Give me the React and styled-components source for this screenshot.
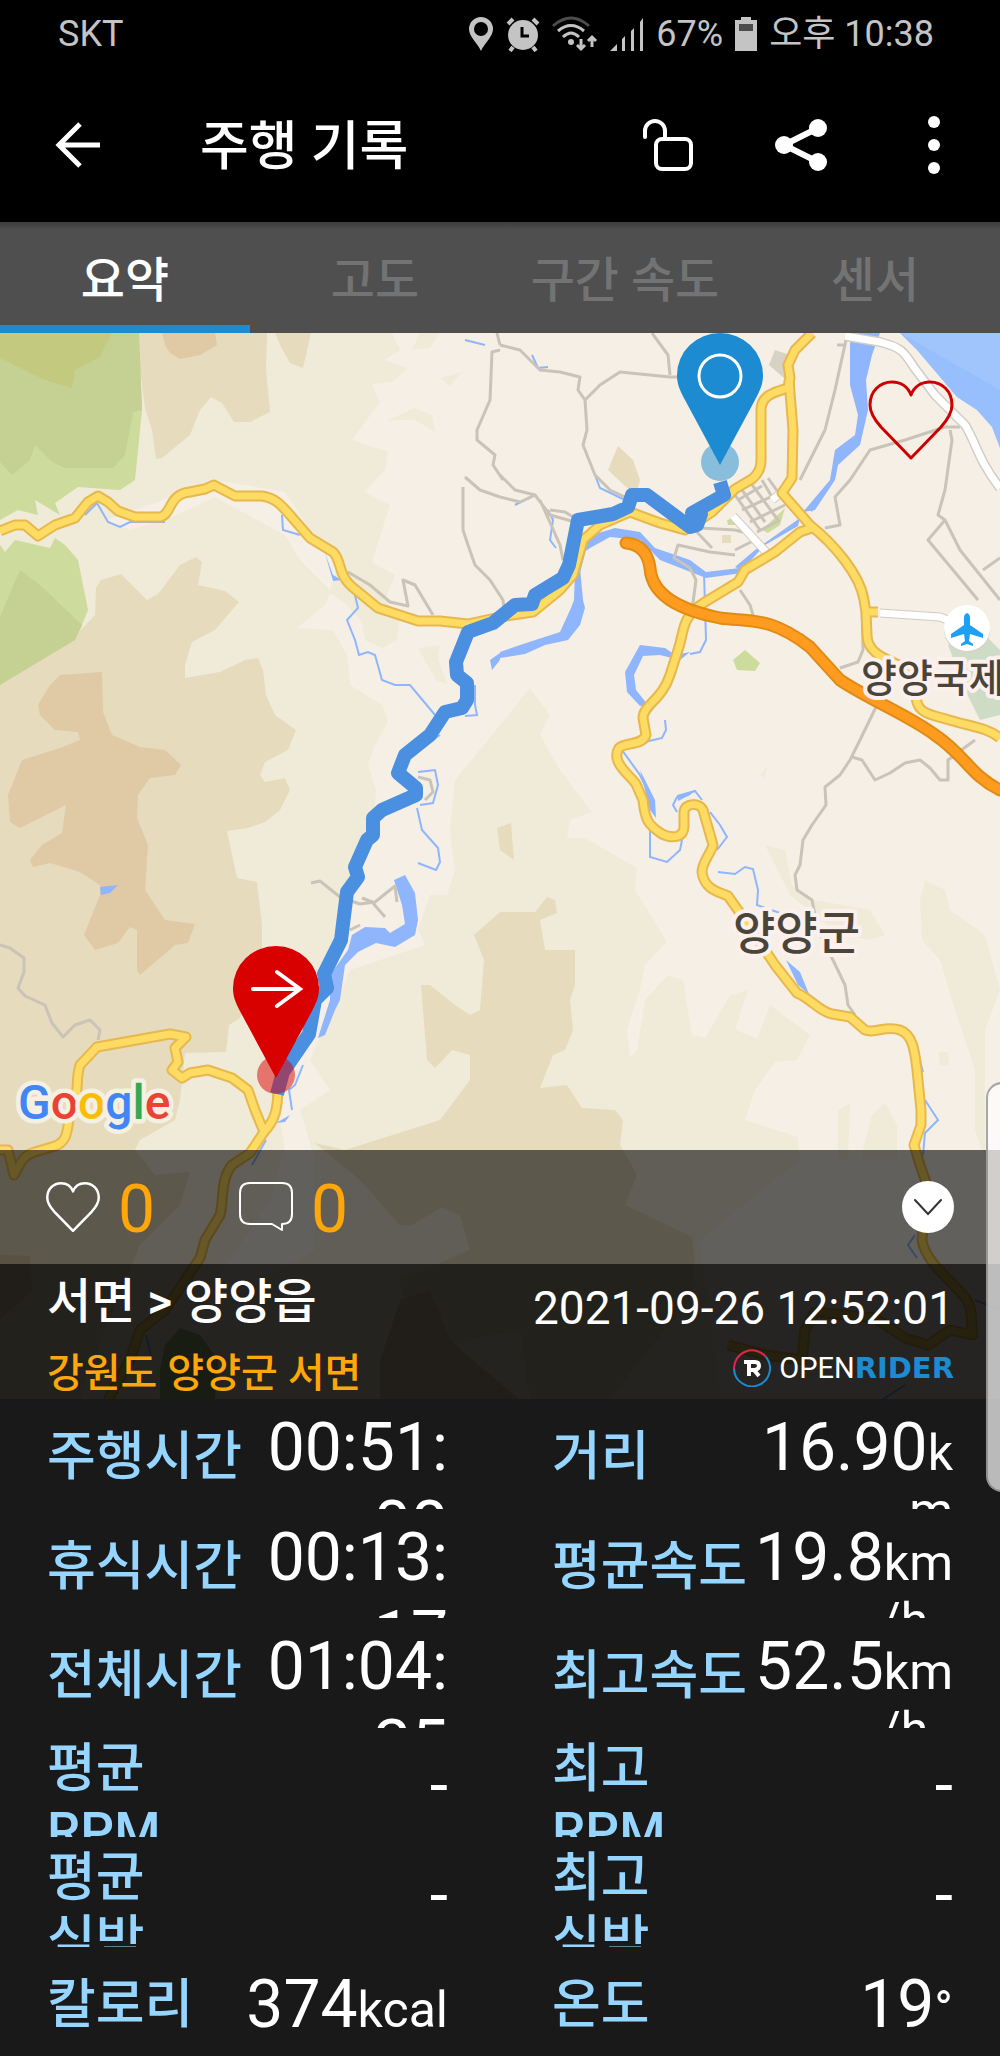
import { useState } from 'react'
import styled, { createGlobalStyle } from 'styled-components'

const tabs = ['요약', '고도', '구간 속도', '센서']

const stats = [
  { label: '주행시간', value: '00:51:08' },
  { label: '거리', value: '16.90', unit: 'km' },
  { label: '휴식시간', value: '00:13:17' },
  { label: '평균속도', value: '19.8', unit: 'km/h\u00a0\u00a0' },
  { label: '전체시간', value: '01:04:25' },
  { label: '최고속도', value: '52.5', unit: 'km/h\u00a0\u00a0' },
  { label: '평균 RPM', value: '-' },
  { label: '최고 RPM', value: '-' },
  { label: '평균 심박', value: '-' },
  { label: '최고 심박', value: '-' },
  { label: '칼로리', value: '374', unit: 'kcal' },
  { label: '온도', value: '19', unit: '°' },
]

const lowland = [
  'M0 333H392L400 350 385 360 408 368 392 382 372 384 380 402 352 440 388 452 385 470 364 492 390 505 372 562 395 575 385 600 400 618 397 640 382 648 365 640 362 622 345 603 330 593 325 605 297 628 333 630 347 655 350 685 382 705 388 722 375 745 368 765 376 790 372 840 355 870 342 930 330 960 310 990 300 1025 275 1090 285 1150 270 1200 230 1260 150 1400H0Z',
  'M500 725L530 688 550 715 540 735 560 770 592 812 570 820 567 838 585 838 637 868 635 890 660 930 667 942 645 965 640 990 627 1030 630 1057 637 1050 645 1000 668 975 683 980 692 1035 705 1038 730 995 748 990 735 1030 757 1038 770 1005 810 1035 797 1060 775 1062 755 1090 745 1120 798 1137 800 1160 700 1240 720 1400H160L230 1300 315 1250 315 1160 300 1110 330 1090 310 1060 350 970 425 945 418 930 430 895 447 895 455 870 450 830 455 780Z',
  'M925 880L945 890 950 910 985 935 1000 990 985 1030 985 1160 975 1130 975 1070 955 1010 940 960 922 940 920 900Z',
  'M765 845L785 850 792 885 815 900 870 910 885 935 870 940 840 935 790 895Z',
  'M838 1110L850 1103 848 1160H838ZM872 1115L885 1103 897 1125V1160H860Z',
  'M760 775L767 766 765 778ZM938 1052H948L949 1065 940 1066Z',
  'M412 350L420 333H440L430 348ZM440 378L462 372 450 386ZM388 420L415 408 432 415 435 432 415 420ZM418 648L440 645 438 660 448 685 436 680Z',
]

const hills = [
  'M139 333H267L266 370 270 412 250 422H234L222 403 211 397 200 410 190 435 162 458 156 459 152 430 145 408 140 370Z',
  'M275 333H311L303 368 290 363 280 345Z',
  'M0 685L30 665 78 633 95 615 96 588 101 580 121 574 147 600 158 594 180 565 196 557 202 562 198 585 225 591 239 602 215 630 192 642 185 665 185 678 220 672 245 660 258 658 263 670 266 695 275 715 296 730 288 750 265 762 260 775 265 782 285 778 290 790 280 810 265 822 248 828 227 831 237 878 257 882 262 925 262 960 240 1018 229 1025 226 1052 185 1053 180 1100 175 1120 140 1140 135 1150 155 1175 190 1172 180 1205 140 1245 130 1270 100 1340 80 1400H0Z',
  'M500 912H535L547 897 555 900 557 913 540 920 545 950H575V985L570 1000 573 1030 565 1050 553 1055 540 1088 567 1085 582 1108 615 1110 623 1120 620 1145 637 1175 625 1205 692 1237 695 1265 690 1300 640 1360 610 1400H530L520 1330 410 1350 400 1280 470 1250 460 1215 442 1207 412 1225 400 1225 360 1180 315 1143 345 1150 440 1120 470 1080 470 1055 452 1050 435 1068 427 1060 421 985 430 985 455 1005 470 1015 480 1010 484 960 474 935Z',
  'M497 828L511 823 514 860 500 850Z',
  'M608 470L618 446 633 460 640 480 636 495 624 485Z',
  'M722 535H731V543H722Z',
]

const peaks = [
  'M162 333H215L217 345 200 355 180 359 170 353 165 345Z',
  'M60 675L102 672 103 712 112 735 140 747 165 750 181 765 175 775 150 778 138 795 137 818 148 845 145 890 165 920 195 924 188 943 175 945 140 975 137 970V930L130 927 118 943 95 950 84 935 100 895V885L80 872 50 863 33 867 30 860 42 845 62 833 66 805 20 828 10 822 8 795 22 760 60 748 80 740 78 732 55 730 40 715 38 705 50 685Z',
  'M0 1255L30 1256 32 1290 0 1320ZM380 1360L400 1300 430 1290 450 1340 520 1400H380Z',
]

const minorRoads = [
  'M500 345L520 350 540 370 560 372 580 377 578 390 585 400 587 430 583 445 595 475 610 490 625 497',
  'M585 400L600 385 620 372 670 377 690 377M652 333L668 355 670 375',
  'M846 340L835 390 825 430 800 480M837 345H845',
  'M960 427H945L905 440 870 450 850 480 835 497 840 525 825 528',
  'M950 430L952 440 945 490 938 515 945 520 928 540 978 600M945 520L960 550 1000 600M983 570L1000 558',
  'M500 475L515 490 535 495 550 515 575 522M540 500L560 545 563 560M500 497L520 502 535 495M550 510L565 512 578 520',
  'M735 555L710 552 678 545 674 558 690 568 696 580 692 610M695 530L712 548M700 528L735 530 755 535M735 550L755 540',
  'M740 590L750 605 753 615M862 605L863 650 858 662 840 668',
  'M876 707L860 740 850 760 840 775 825 787 826 805 812 825 803 840 800 865 795 875 797 890 812 900 818 930 833 960 845 985 848 1005 855 1015',
  'M852 757L862 760 875 780 890 773 905 763 920 760 930 768 940 780 948 780 948 760 975 740',
  'M497 333L500 345M500 350L492 352 490 400 477 430V440L495 455 493 465 503 480M465 477L480 490 500 497M463 487V530L468 545 475 565 490 580 503 600 504 608',
  'M348 572L370 585 390 602 408 606 403 580 415 585 433 615',
  'M0 945L10 948 24 958V972L18 988 25 996 45 1005 52 1023 63 1037 75 1025 90 1020 100 1030 98 1040',
  'M311 883L320 881 340 897 360 904 375 902 395 886 397 902M362 898L372 902 385 917M350 930L360 925',
  'M418 777L430 780 433 792 425 800',
]

const townStreets = [
  'M735 495L760 530M742 490L765 522M750 482L778 520M762 480L772 497M768 478L778 492',
  'M738 500L762 486M742 510L775 495M750 522L785 505M757 532L780 520',
]

const rivers = [
  'M500 655L522 648',
  'M577 580L585 550M704 573L706 640 700 652 690 654',
  'M622 750L640 775 652 800M650 830V857L667 862 680 850 682 840M677 812L673 805 677 797 695 791 702 800',
  'M710 812L720 825 727 837 717 850M718 872L735 874 745 867 753 869 758 890 757 905 800 920 795 945M665 720L666 730 662 738 645 742',
  'M925 1100L938 1120 925 1133 923 1155M906 1030L915 1042 923 1072M915 1235L908 1245 917 1258',
  'M85 515L97 503 108 522 120 527 130 522H165M282 515L283 530 300 535M355 595L358 608 347 620 355 640 359 655 368 652 375 655 382 680 395 685H410L435 715',
  'M418 772L435 770 438 785 433 803 420 805M417 808L422 830 438 848 440 862 436 870 418 863M405 758L440 735',
  'M303 1065L295 1085 289 1090 292 1110M266 1140L252 1165M475 685V705L477 715 465 716',
  'M465 340L485 345M532 355L538 368 548 367M595 475L600 488 625 500M548 510L553 520 550 540 556 548M515 505L535 495',
  'M1000 1310L975 1300M882 1400L905 1385M146 1335L152 1360',
]

const wideRivers = [
  'M851 333H880L872 355 866 380 868 410 860 445 838 465 835 480 815 510 803 512 830 480 835 450 855 435 858 415 850 385V345Z',
  'M580 555L592 535 615 528 640 532 655 548 690 560 706 572 740 568 742 573 706 578 660 560 640 540 610 537 590 548Z',
  'M575 570L580 568 583 600 585 608 580 625 568 640 545 645 525 654 500 658 500 652 520 645 560 632 571 608 574 600Z',
  'M640 645L665 648 675 655 690 652 680 660 660 655 643 656 634 675 636 690 648 705 640 706 627 692 625 672Z',
  'M735 567L755 550 800 518 798 526 765 545 742 570ZM810 510L830 482 812 512ZM765 553L795 532 790 540Z',
  'M394 880L405 875 415 893 418 920 415 935 395 947 376 943 358 952 345 965 340 1000 335 1010 325 1035 318 1038 330 1000 330 975 348 950 352 935 365 927 385 928 390 933 405 924 402 905Z',
  'M100 887L118 885 110 893 101 895ZM490 660L500 653V660L492 670ZM325 553L333 575 342 580 333 581ZM786 960L800 972 809 994 798 985Z',
  'M640 770L655 800 656 818 650 810ZM677 795L695 790 690 795 678 801ZM710 810L728 837 718 822ZM276 1123L290 1115 285 1122Z',
]

const mainRoads = [
  'M0 531L15 525 25 525 38 536 55 525 75 518 88 502 98 496 108 502 118 511 135 517H160C172 515 168 494 190 492L205 489 214 485 235 496 262 496C276 498 282 506 290 515L310 538 333 552C343 562 336 575 356 590L378 608 418 621 440 621 468 624 500 617 533 612 560 590 573 575 583 540 600 525 630 512 660 523 685 530 712 512 735 489 752 479C763 470 761 460 761 450V410C761 395 775 392 788 388L790 378 788 365 795 350 812 333',
  'M789 380L793 430 792 478 782 493 810 525C835 545 860 575 864 600L866 612 867 635C867 655 890 660 905 668L916 690C915 706 920 712 935 716L960 723C980 728 990 730 1000 738',
  'M866 612H878',
  'M815 527L800 532 775 552 745 570 738 582 705 602C680 618 685 630 678 650L670 675C662 700 643 705 643 718L646 735C642 746 625 742 619 748 610 762 630 775 636 784L643 800C645 820 648 825 662 834 672 839 685 838 684 825V812C685 802 700 803 703 810L713 845C710 855 702 862 702 872 704 890 720 892 728 896L745 920 775 965 797 993C810 998 820 1012 832 1014L850 1017 865 1030C875 1034 885 1025 900 1030 914 1035 915 1055 917 1070L921 1110 921 1125 914 1145 920 1165 927 1185 925 1205 922 1240C925 1260 945 1275 960 1292 975 1305 970 1320 973 1335L950 1330 928 1345 905 1338 875 1318 815 1312 805 1330 802 1360 765 1355 728 1345',
  'M0 1150L8 1150 14 1175C22 1160 24 1155 35 1152L55 1146C72 1140 65 1122 73 1105 80 1090 75 1080 80 1065L97 1047 170 1034 186 1037 175 1048 178 1062 172 1070 182 1078 190 1073 208 1070 232 1078 248 1090 255 1110 264 1132C275 1120 278 1110 278 1085',
  'M264 1132L250 1153 232 1165C220 1180 224 1200 220 1215L205 1240 200 1258 165 1310 140 1330 130 1360 108 1400',
]

const highway = 'M626 543C640 544 648 553 650 568 652 600 690 612 720 618 750 622 770 616 810 647L840 680C870 700 910 716 935 735 965 755 970 775 1000 790'

const coastRoad = 'M845 336L880 342C905 348 905 355 916 370L935 395 965 425C975 440 978 460 1000 488'

const track = 'M277 1094L283 1072 309 1034 315 1000 327 988 324 974 341 940 347 892 358 877 355 867 367 840 373 835 373 818 382 810 416 795 416 788 398 773 405 755 430 735 445 712 462 708 467 700 467 683 457 675 456 662 468 632 493 623 515 605 532 604 535 595 563 578 569 565 578 520 613 514 628 507 632 495 647 495 690 527 697 525 701 514 692 513 724 495 720 482'

const heartPath = 'M43 78L13 47C5 38 2 32 2 25 2 11 12 2 24 2 33 2 40 7 43 15 46 7 53 2 62 2 74 2 84 11 84 25 84 32 81 38 73 47Z'

const Heart = ({ width, stroke, color }) => (
  <svg width={width} viewBox="0 0 86 80" fill="none" stroke={color} strokeWidth={stroke} aria-hidden="true">
    <path d={heartPath} strokeLinejoin="round" />
  </svg>
)

const Pin = ({ x, y, color, children }) => (
  <g transform={`translate(${x} ${y})`}>
    <circle cx="0" cy="-3" r="19" fill={color} opacity="0.5" />
    <path fill={color} d="M0 0L-35 -65C-41 -76 -43 -82 -43 -90A43 42 0 0 1 43 -90C43 -82 41 -76 35 -65Z" />
    {children}
  </g>
)

const MapArt = () => (
  <MapSvg viewBox="0 333 1000 1066" preserveAspectRatio="xMidYMin slice">
    <rect y="333" width="1000" height="1066" fill="#f6efe6" />
    {lowland.map((d) => <path key={d} d={d} fill="#f0ebd8" />)}
    <path d="M150 505L215 480 285 492 310 530 340 560 330 590 300 560 285 535 215 497 170 518 130 530 105 520Z" fill="#f6efe6" />
    {hills.map((d) => <path key={d} d={d} fill="#e6dbbc" />)}
    {peaks.map((d) => <path key={d} d={d} fill="#dfcaa5" />)}

    <path fill="#cddb9c" d="M0 333H139L142 410 135 480 120 490 78 487 55 503 60 515 35 500 38 515 18 510 0 520ZM0 545L5 552 15 540 50 548 55 538 65 545 78 560 88 610 80 630 30 665 0 685Z" />
    <path fill="#c5d192" d="M0 333H139L142 410 133 412 125 455 113 468H65L52 462 35 445 30 460 12 475 0 462ZM0 617L20 570 40 585 82 625 75 640 0 685Z" />
    <path fill="#c3c97f" d="M0 333H112L100 357 75 370 72 388 45 380 0 358Z" />
    <path fill="#cddb9c" d="M733 660L745 650 760 663 755 671 737 670ZM762 530L785 508 780 525 768 533ZM727 520L735 518V525H728Z" />
    <path fill="#cfdcc5" d="M948 645L985 635 1000 650V715L980 720 970 700 965 690Z" />
    <path fill="#d7d2c3" d="M769 365L775 350 790 355 785 379Z" />
    <path fill="#a0c5fd" d="M900 333H1000V448L992 427 977 410 957 397 917 350Z" />
    <path fill="#8ab4fd" opacity="0.4" d="M900 333L1000 390V448L992 427 977 410 957 397 917 350Z" />
    <path fill="#a9bd78" d="M160 1370L165 1345 180 1328 200 1335 218 1360 215 1399H160Z" />

    {wideRivers.map((d) => <path key={d} d={d} fill="#8fb5fd" />)}
    <g fill="none" stroke="#8fb5fd" strokeWidth="2">
      {rivers.map((d) => <path key={d} d={d} />)}
    </g>
    <g fill="none" stroke="#c9c3b8" strokeWidth="3" strokeLinejoin="round">
      {minorRoads.map((d) => <path key={d} d={d} />)}
      {townStreets.map((d) => <path key={d} d={d} />)}
    </g>
    <g fill="none" strokeLinejoin="round">
      <path d={coastRoad} stroke="#d3ccc2" strokeWidth="10" />
      <path d={coastRoad} stroke="#fff" strokeWidth="7" />
      <path d="M733 516L767 553M772 500L782 492M880 613L940 617 960 625" stroke="#d3ccc2" strokeWidth="9" />
      <path d="M733 516L767 553M772 500L782 492M880 613L940 617 960 625" stroke="#fff" strokeWidth="7" />
      {mainRoads.map((d) => <path key={d} d={d} stroke="#e6b84d" strokeWidth="11" />)}
      {mainRoads.map((d) => <path key={d} d={d} stroke="#fedb62" strokeWidth="7" />)}
      <path d={highway} stroke="#e08c14" strokeWidth="13" strokeLinecap="round" />
      <path d={highway} stroke="#ff9c20" strokeWidth="9" strokeLinecap="round" />
      <path d={track} stroke="#4a8fe0" strokeWidth="14" />
    </g>

    <circle cx="967" cy="630" r="23" fill="#d9d2c8" />
    <circle cx="967" cy="628" r="23" fill="#fff" />
    <path fill="#1ea0f5" d="M967 613Q970 614 970 618V625L983 634V638L970 634 969 641 973 644V646L967 644 961 646V644L965 641 964 634 951 638V634L964 625V618Q964 614 967 613Z" />
    <MapLabel x="861" y="692" $size={39}>양양국제</MapLabel>
    <MapLabel x="733" y="949" $size={46}>양양군</MapLabel>

    <Pin x={720} y={465} color="#1c8bd1">
      <circle cy="-89" r="21" fill="none" stroke="#fff" strokeWidth="3" />
    </Pin>
    <Pin x={276} y={1078} color="#d90000">
      <path d="M-23 -89H24M1 -106L24 -89 1 -72" fill="none" stroke="#fff" strokeWidth="4" strokeLinecap="round" />
    </Pin>
    <Brand x="18" y="1119">
      <tspan fill="#4285f4">G</tspan>
      <tspan fill="#ea4335">o</tspan>
      <tspan fill="#fbbc05">o</tspan>
      <tspan fill="#4285f4">g</tspan>
      <tspan fill="#34a853">l</tspan>
      <tspan fill="#ea4335">e</tspan>
    </Brand>
  </MapSvg>
)

const StatusIcons = () => (
  <>
    <svg width="26" height="36" viewBox="0 0 26 36" fill="#c4c4c4" aria-hidden="true">
      <path fillRule="evenodd" d="M13 1A12 12 0 0 0 1 13C1 21 9 26 13 35 17 26 25 21 25 13A12 12 0 0 0 13 1ZM13 6a7 7 0 1 1 0 14 7 7 0 0 1 0-14Z" />
    </svg>
    <svg width="34" height="36" viewBox="0 0 34 36" aria-hidden="true">
      <circle cx="17" cy="19" r="15" fill="#c4c4c4" />
      <path d="M2 8L7 3M27 3L32 8M7 31L4 35M27 31L30 35" stroke="#c4c4c4" strokeWidth="4" />
      <path d="M16 11V20H23" fill="none" stroke="#000" strokeWidth="3" />
    </svg>
    <svg width="46" height="36" viewBox="0 0 46 36" fill="none" stroke="#c4c4c4" strokeWidth="3" aria-hidden="true">
      <path d="M1 10Q19 -6 37 10" stroke="#4c4c4c" />
      <path d="M6 15Q19 4 32 15M11 21Q19 13 27 21" />
      <circle cx="19" cy="26" r="3" fill="#c4c4c4" stroke="none" />
      <path d="M29 23V33M25 29L29 33 33 29M40 31V21M36 25L40 21 44 25" />
    </svg>
    <svg width="34" height="36" viewBox="0 0 34 36" fill="#c4c4c4" aria-hidden="true">
      <path d="M0 35L7 28V35ZM12 23L15 20V35H12ZM21 15L24 12V35H21ZM30 6L33 2V35H30Z" />
    </svg>
  </>
)

const App = () => {
  const [active, setActive] = useState(tabs[0])

  return (
    <Page>
      <GlobalStyle />
      <StatusBar>
        <span>SKT</span>
        <StatusGroup>
          <StatusIcons />
          <span>67%</span>
          <svg width="22" height="34" viewBox="0 0 22 34" aria-hidden="true">
            <path d="M6 0H16V3H22V34H0V3H6Z" fill="#c4c4c4" />
            <path d="M4 7H18V14H4Z" fill="#4c4c4c" />
          </svg>
          <span>오후 10:38</span>
        </StatusGroup>
      </StatusBar>

      <AppBar>
        <IconButton aria-label="뒤로">
          <svg width="52" height="52" viewBox="0 0 52 52" fill="none" stroke="#fff" strokeWidth="5">
            <path d="M48 26H8M28 5L7 26 28 47" />
          </svg>
        </IconButton>
        <Title>주행 기록</Title>
        <Actions>
          <IconButton aria-label="잠금 해제">
            <svg width="52" height="52" viewBox="0 0 52 52" fill="none" stroke="#fff" strokeWidth="4">
              <path d="M3 18V12A10 10 0 0 1 23 12V19" strokeLinecap="round" />
              <rect x="14" y="20" width="35" height="30" rx="6" />
            </svg>
          </IconButton>
          <IconButton aria-label="공유">
            <svg width="52" height="52" viewBox="0 0 52 52" fill="#fff">
              <circle cx="9" cy="26" r="9" />
              <circle cx="43" cy="9" r="9" />
              <circle cx="43" cy="43" r="9" />
              <path d="M43 9L9 26 43 43" fill="none" stroke="#fff" strokeWidth="6" />
            </svg>
          </IconButton>
          <IconButton aria-label="더보기">
            <svg width="52" height="60" viewBox="0 0 52 60" fill="#fff">
              <circle cx="26" cy="7" r="6" />
              <circle cx="26" cy="30" r="6" />
              <circle cx="26" cy="53" r="6" />
            </svg>
          </IconButton>
        </Actions>
      </AppBar>

      <TabBar role="tablist">
        {tabs.map((tab) => (
          <Tab
            key={tab}
            role="tab"
            aria-selected={tab === active}
            $active={tab === active}
            onClick={() => setActive(tab)}
          >
            {tab}
          </Tab>
        ))}
      </TabBar>

      <MapSection>
        <MapArt />
        <LikeButton aria-label="좋아요">
          <Heart width={86} stroke={3} color="#cc0000" />
        </LikeButton>
        <MapWindow />
        <SocialBar>
          <Counter aria-label="좋아요 수">
            <Heart width={54} stroke={4} color="#fff" />
            <Count>0</Count>
          </Counter>
          <Counter aria-label="댓글 수">
            <svg width="54" height="50" viewBox="0 0 54 50" fill="none" stroke="#fff" strokeWidth="2" aria-hidden="true">
              <path d="M11 1H43Q53 1 53 11V32Q53 42 43 42V48L33 42H11Q1 42 1 32V11Q1 1 11 1Z" strokeLinejoin="round" />
            </svg>
            <Count>0</Count>
          </Counter>
          <CollapseButton aria-label="접기">
            <svg width="28" height="18" viewBox="0 0 28 18" fill="none" stroke="#333" strokeWidth="2" strokeLinecap="round">
              <path d="M1 2L14 16 27 2" />
            </svg>
          </CollapseButton>
        </SocialBar>
        <RideBar>
          <RideNames>
            <RideName>서면 &gt; 양양읍</RideName>
            <Address>강원도 양양군 서면</Address>
          </RideNames>
          <RideMeta>
            <RideDate>2021-09-26 12:52:01</RideDate>
            <Logo>
              <svg width="38" height="38" viewBox="0 0 38 38" fill="none" strokeWidth="2" aria-hidden="true">
                <path d="M1 20A18 18 0 0 1 33 8" stroke="#e0244e" />
                <path d="M33 8A18 18 0 1 1 1 20" stroke="#1c8bd1" />
                <path d="M11 13H22Q26 13 26 17 26 20 22 21H18M16 13V27M21 21L26 27" stroke="#fff" strokeWidth="4" />
              </svg>
              <LogoText>OPEN<strong>RIDER</strong></LogoText>
            </Logo>
          </RideMeta>
        </RideBar>
      </MapSection>

      <Stats>
        {stats.map(({ label, value, unit }) => (
          <Stat key={label}>
            <StatLabel>{label}</StatLabel>
            <StatValue>
              <div>
                <StatNumber>{value}</StatNumber>
                {unit}
              </div>
            </StatValue>
          </Stat>
        ))}
      </Stats>
      <EdgeHandle />
    </Page>
  )
}

export default App

const GlobalStyle = createGlobalStyle`
  * {
    box-sizing: border-box;
  }

  body {
    margin: 0;
    background: #191919;
    font-family: Roboto, 'Noto Sans CJK KR', sans-serif;
  }

  button {
    padding: 0;
    border: 0;
    background: none;
    font-family: inherit;
    cursor: pointer;
  }

  svg {
    display: block;
    flex: none;
  }
`

const Page = styled.div`
  position: relative;
  display: flex;
  flex-direction: column;
  min-height: 100vh;
  overflow: hidden;
  color: #fff;
`

const StatusBar = styled.div`
  display: flex;
  align-items: center;
  justify-content: space-between;
  height: 72px;
  padding: 0 66px 4px 58px;
  background: #000;
  color: #c4c4c4;
  font-size: 36px;
  line-height: 48px;
`

const StatusGroup = styled.div`
  display: flex;
  align-items: center;
  gap: 12px;
`

const AppBar = styled.header`
  display: flex;
  align-items: center;
  height: 150px;
  padding: 0 40px 4px 52px;
  background: #000;
`

const IconButton = styled.button`
  display: flex;
  align-items: center;
  justify-content: center;
  width: 52px;
  height: 64px;
`

const Title = styled.h1`
  margin: 0 0 0 96px;
  padding-top: 4px;
  font-size: 53px;
  font-weight: 500;
  line-height: 72px;
`

const Actions = styled.div`
  display: flex;
  gap: 81px;
  margin-left: auto;
`

const TabBar = styled.nav`
  display: grid;
  grid-template-columns: repeat(4, 1fr);
  height: 111px;
  background: linear-gradient(#3c3c3c, #4f4f4f 8px);
`

const Tab = styled.button`
  padding-top: 4px;
  border-bottom: 8px solid ${({ $active }) => ($active ? '#1c8bd1' : 'transparent')};
  color: ${({ $active }) => ($active ? '#fff' : '#737373')};
  font-size: 48px;
  font-weight: 500;
`

const MapSection = styled.section`
  position: relative;
  overflow: hidden;
`

const MapSvg = styled.svg`
  position: absolute;
  inset: 0;
  width: 100%;
  height: 100%;
`

const MapLabel = styled.text`
  fill: #4a4539;
  stroke: #fbf0ee;
  stroke-width: 8px;
  stroke-linejoin: round;
  paint-order: stroke;
  font-size: ${({ $size }) => $size}px;
  font-weight: 500;
`

const Brand = styled.text`
  stroke: #f4f0e2;
  stroke-width: 9px;
  stroke-linejoin: round;
  paint-order: stroke;
  font-size: 48px;
  font-weight: 500;
`

const LikeButton = styled.button`
  position: absolute;
  top: 47px;
  right: 46px;
`

const MapWindow = styled.div`
  aspect-ratio: 1000 / 817;
`

const SocialBar = styled.div`
  position: relative;
  display: flex;
  align-items: center;
  gap: 84px;
  height: 114px;
  padding: 0 46px;
  background: rgba(0, 0, 0, 0.6);
`

const Counter = styled.button`
  display: flex;
  align-items: center;
  gap: 18px;
`

const Count = styled.span`
  padding-top: 6px;
  color: #ffa70a;
  font-size: 66px;
  line-height: 78px;
`

const CollapseButton = styled.button`
  display: flex;
  align-items: center;
  justify-content: center;
  width: 52px;
  height: 52px;
  margin-left: auto;
  border-radius: 50%;
  background: #fff;
`

const RideBar = styled.div`
  position: relative;
  display: flex;
  justify-content: space-between;
  height: 135px;
  padding: 0 46px 0 47px;
  background: rgba(0, 0, 0, 0.85);
`

const RideNames = styled.div`
  padding-top: 4px;
`

const RideName = styled.h2`
  margin: 0 0 12px;
  font-size: 48px;
  font-weight: 500;
  line-height: 68px;
`

const Address = styled.div`
  color: #ffa70a;
  font-size: 40px;
  font-weight: 500;
  line-height: 52px;
`

const RideMeta = styled.div`
  display: flex;
  flex-direction: column;
  align-items: flex-end;
  gap: 7px;
  padding-top: 10px;
`

const RideDate = styled.time`
  font-size: 46px;
  line-height: 68px;
`

const Logo = styled.div`
  display: flex;
  align-items: center;
  gap: 8px;
`

const LogoText = styled.span`
  font-size: 29px;
  line-height: 38px;

  strong {
    color: #1c8bd1;
    font-family: 'DejaVu Sans', sans-serif;
    font-weight: 700;
  }
`

const Stats = styled.dl`
  display: grid;
  flex: 1;
  grid-template-columns: repeat(2, minmax(0, 1fr));
  grid-template-rows: repeat(6, minmax(109px, 1fr));
  column-gap: 104px;
  margin: 0;
  padding: 0 47px;
  background: #191919;
`

/* Text that wraps to a second line is cut off at the bottom of its row. */
const Stat = styled.div`
  display: grid;
  grid-template-columns: minmax(0, 49fr) minmax(0, 51fr);
  grid-template-rows: minmax(0, 1fr);
  align-items: safe center;
  height: 0;
  min-height: 100%;
  padding: 10px 0 2px;
  overflow: hidden;
`

const StatLabel = styled.dt`
  color: #96d5ff;
  font-size: 53px;
  font-weight: 500;
  line-height: 63px;
  word-break: keep-all;
`

const StatValue = styled.dd`
  margin: 0;
  font-size: 50px;
  line-height: 48px;
  text-align: right;
  overflow-wrap: anywhere;
`

const StatNumber = styled.span`
  font-size: 66px;
  line-height: 78px;
`

const EdgeHandle = styled.div`
  position: absolute;
  top: 1082px;
  right: -2px;
  width: 16px;
  height: 410px;
  border: 2px solid rgba(130, 130, 130, 0.7);
  border-right: 0;
  border-radius: 16px 0 0 16px;
  background: rgba(255, 255, 255, 0.7);
`
